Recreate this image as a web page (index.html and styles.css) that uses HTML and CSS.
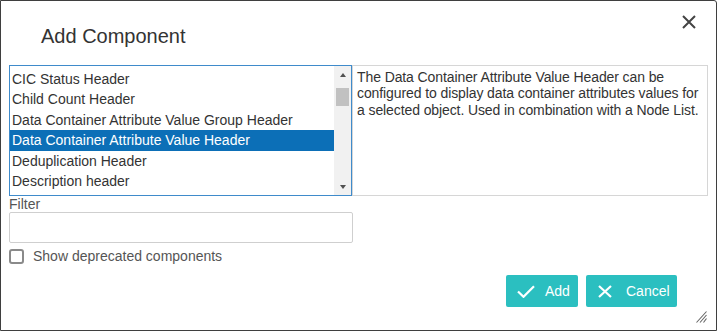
FILE: index.html
```html
<!DOCTYPE html>
<html lang="en">
<head>
  <meta charset="UTF-8">
  <title>Add Component</title>
  <link rel="stylesheet" href="styles.css">
</head>
<body>

  <div class="dialog">
    <!-- Header -->
    <div class="dialog-header">
      <h1 class="dialog-title">Add Component</h1>
      <button class="close-btn" aria-label="Close">
        <svg width="14" height="14" viewBox="0 0 14 14"><path d="M1 1L13 13M13 1L1 13" stroke="#444" stroke-width="2" fill="none"/></svg>
      </button>
    </div>

    <!-- Body -->
    <div class="dialog-body">
      <div class="picker">
        <div class="component-list">
          <ul class="items">
            <li>CIC Status Header</li>
            <li>Child Count Header</li>
            <li>Data Container Attribute Value Group Header</li>
            <li class="selected">Data Container Attribute Value Header</li>
            <li>Deduplication Header</li>
            <li>Description header</li>
          </ul>
          <div class="scrollbar">
            <span class="arrow up"></span>
            <div class="track"><span class="thumb"></span></div>
            <span class="arrow down"></span>
          </div>
        </div>
        <div class="description">The Data Container Attribute Value Header can be configured to display data container attributes values for a selected object. Used in combination with a Node List.</div>
      </div>

      <label class="filter-label" for="filter">Filter</label>
      <input class="filter-input" id="filter" type="text">

      <label class="check">
        <span class="check-box"></span>
        Show deprecated components
      </label>
    </div>

    <!-- Footer -->
    <div class="dialog-footer">
      <button class="btn btn-add">
        <svg width="18" height="13" viewBox="0 0 18 13"><path d="M1 6.5L6.5 11.8L17 1.2" stroke="#fff" stroke-width="2.2" fill="none"/></svg>
        Add
      </button>
      <button class="btn btn-cancel">
        <svg width="14" height="13" viewBox="0 0 14 13"><path d="M1 1L13 12M13 1L1 12" stroke="#fff" stroke-width="2.2" fill="none"/></svg>
        Cancel
      </button>
    </div>

    <!-- Resize grip -->
    <svg class="grip" width="11" height="12" viewBox="0 0 11 12">
      <path d="M10.5 0.5L0.5 11.5M10.5 4L4 11.5M10.5 7.5L7.5 11.5" stroke="#666" stroke-width="1.1" fill="none"/>
    </svg>
  </div>

</body>
</html>
```

FILE: styles.css
```css
* {
  box-sizing: border-box;
  margin: 0;
  padding: 0;
}
body {
  font-family: "Liberation Sans", Arial, sans-serif;
  background: #fff;
  color: #333;
}
.dialog {
  position: relative;
  display: flex;
  flex-direction: column;
  width: 717px;
  height: 331px;
  border: 1px solid #3f3f3f;
  border-top-right-radius: 3px;
  background: #fff;
}
.dialog-header {
  display: flex;
  justify-content: space-between;
  align-items: flex-start;
  height: 64px;
  padding: 0 20px 0 40px;
}
.dialog-title {
  padding-top: 24px;
  font-size: 20px;
  line-height: 23px;
  font-weight: normal;
  color: #333;
}
.close-btn {
  margin-top: 14px;
  width: 14px;
  height: 14px;
  border: none;
  background: none;
  display: flex;
}
.dialog-body {
  display: flex;
  flex-direction: column;
  padding: 0 8px;
}
.picker {
  display: flex;
  height: 131px;
}
.component-list {
  display: flex;
  width: 344px;
  border: 1px solid #3f8bcb;
}
.items {
  flex: 1;
  list-style: none;
  padding-top: 2.5px;
  overflow: hidden;
}
.items li {
  height: 20.5px;
  line-height: 20px;
  padding-left: 2px;
  font-size: 14px;
  color: #333;
  white-space: nowrap;
}
.items li.selected {
  background: #0c6fb7;
  color: #fff;
}
.scrollbar {
  display: flex;
  flex-direction: column;
  width: 17px;
  background: #f1f1f1;
}
.arrow {
  height: 17px;
  display: flex;
  justify-content: center;
  align-items: center;
}
.arrow::before {
  content: "";
  border-left: 3.5px solid transparent;
  border-right: 3.5px solid transparent;
}
.arrow.up::before {
  border-bottom: 4px solid #505050;
}
.arrow.down::before {
  border-top: 4px solid #505050;
}
.track {
  flex: 1;
  padding: 5px 2px 0;
}
.thumb {
  display: block;
  height: 18px;
  background: #c1c1c1;
}
.description {
  width: 357px;
  border: 1px solid #d6d6d6;
  padding: 3px 2px 3px 4px;
  font-size: 14px;
  line-height: 16.3px;
  letter-spacing: -0.1px;
  color: #333;
}
.filter-label {
  font-size: 14px;
  line-height: 16px;
  height: 16px;
  color: #555;
}
.filter-input {
  width: 344px;
  height: 31px;
  border: 1px solid #cfcfcf;
  border-radius: 2px;
  font-family: inherit;
  font-size: 14px;
  padding: 0 6px;
}
.check {
  display: flex;
  align-items: center;
  gap: 9px;
  margin-top: 5px;
  font-size: 14px;
  line-height: 16px;
  color: #555;
}
.check-box {
  width: 15px;
  height: 15px;
  border: 2px solid #8a8a8a;
  border-radius: 3px;
}
.dialog-footer {
  margin-top: auto;
  display: flex;
  justify-content: flex-end;
  gap: 8px;
  padding: 0 39px 23px 0;
}
.btn {
  display: flex;
  align-items: center;
  height: 32px;
  border: none;
  border-radius: 2px;
  background: #2bbfc0;
  color: #fff;
  font-family: inherit;
  font-size: 14px;
}
.btn-add {
  width: 72px;
  padding-left: 11px;
  gap: 10px;
}
.btn-cancel {
  width: 91px;
  padding-left: 12px;
  gap: 14px;
}
.grip {
  position: absolute;
  right: 9px;
  bottom: 7px;
}
```
